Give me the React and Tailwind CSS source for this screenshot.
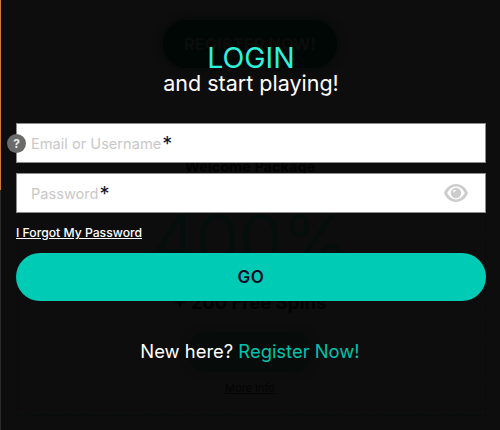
import React from "react";

function Eye() {
  return (
    <svg width="24" height="18" viewBox="0 0 24 18" className="block">
      <path fillRule="evenodd" fill="#cccccc" d="M12 0C6.500 0 2.200 3.600 0 9c2.200 5.400 6.500 9 12 9s9.800-3.600 12-9C21.800 3.600 17.500 0 12 0Zm0 2.600C8.200 2.600 5.200 5.300 3.200 9c2 3.700 5 6.400 8.800 6.400s6.800-2.700 8.800-6.400c-2-3.700-5-6.400-8.800-6.400Z" />
      <path fill="#cccccc" d="M12 3.800a5.200 5.200 0 1 0 0 10.400 5.200 5.200 0 0 0 0-10.400Zm-2.600 2.500c1.300-.7 2.700-.4 3.300.3-1.300 0-2.400 1-2.700 2.400-.7-.8-.9-2-.6-2.700Z" />
    </svg>
  );
}

function Field({ label, children }) {
  return (
    <div className="h-10 bg-white border border-[#8c8c8c] flex items-center pl-[14px] pr-[17px]">
      <span className="text-[14.600px] text-[#c8c8c8] mt-[3px]">{label}</span>
      <span className="text-[20px] text-[#15152a] leading-none ml-px mt-[1px]">*</span>
      <span className="ml-auto">{children}</span>
    </div>
  );
}

export default function App() {
  return (
    <div className="relative w-[500px] h-[430px] overflow-hidden bg-[#0d0d0d] text-white font-['Inter','Noto_Sans',sans-serif]">
      {/* dimmed page behind the dialog */}
      <div className="h-[416px] flex flex-col items-center">
        <div className="mt-5 w-[174px] h-12 rounded-full bg-[#010705] shadow-[0_0_8px_#020a07] flex items-center justify-center text-[16.500px] font-bold text-[#0b0d0c] whitespace-nowrap">
          REGISTER NOW!
        </div>
        <div className="mt-[89px] text-[14.500px] font-bold text-[#020202] leading-5">Welcome Package</div>
        <div className="mt-[25px] text-[70px] leading-[76px] text-[#040e0c] font-light">400%</div>
        <div className="mt-[12px] text-[18.500px] font-bold leading-6 text-[#020202]">+ 200 Free Spins</div>
        <div className="mt-[18px] w-[124px] h-[40px] rounded-full bg-[#070c0a] shadow-[0_0_8px_#090d0b]" />
        <div className="mt-[8px] text-[11px] underline text-[#040404] leading-4">More Info</div>
      </div>
      <div className="absolute left-0 top-0 w-px h-[190px] bg-[#c97a3c]" />
      <div className="absolute left-0 top-[190px] bottom-0 w-px bg-[#2a2a2a]" />
      <div className="absolute left-[17px] right-[14px] top-[200px] bottom-[14px] border border-dashed border-[#030d0b] border-t-0" />

      {/* login dialog */}
      <div className="absolute inset-0 pl-4 pr-[14px] pt-[41px] flex flex-col">
        <h1 className="text-center text-[28.500px] leading-[34px] text-[#2ef2dc] font-normal">LOGIN</h1>
        <p className="text-center text-[21.500px] leading-[24px] -mt-[4px] font-normal">and start playing!</p>

        <div className="relative mt-[28px]">
          <Field label="Email or Username" />
          <div className="absolute -left-[9px] top-[11px] w-[19px] h-[19px] rounded-full bg-[#6b6b6b] flex items-center justify-center text-[12px] font-bold text-[#e8e8e8]">?</div>
        </div>
        <div className="mt-[10px]">
          <Field label="Password"><Eye /></Field>
        </div>

        <a className="mt-[12px] text-[12.200px] leading-4 underline font-medium whitespace-nowrap">I Forgot My Password</a>

        <button className="mt-3 h-12 pt-[2px] rounded-3xl bg-[#00cbb5] text-[#0a0a24] text-[17px] font-semibold tracking-[0.5px]">GO</button>

        <p className="mt-[38px] text-center text-[18.400px] leading-6 -translate-x-px">
          New here? <span className="text-[#00c2ad]">Register Now!</span>
        </p>
      </div>
    </div>
  );
}
